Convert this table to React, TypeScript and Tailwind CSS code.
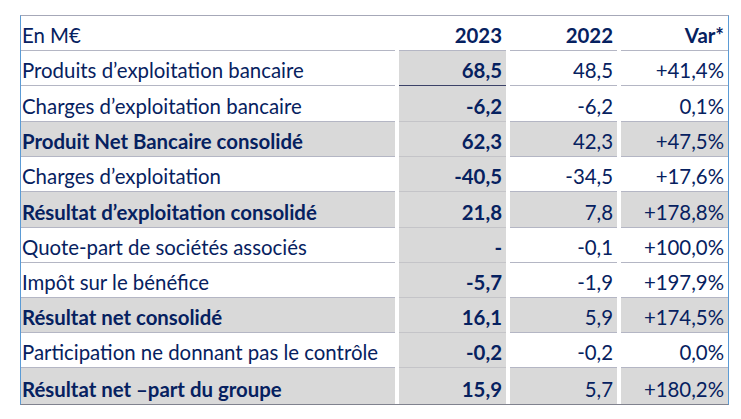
import * as React from "react";

type Row = {
  label: string;
  y23: string;
  y22: string;
  v: string;
  bold?: boolean;
  h: number;
};

const rows: Row[] = [
  { label: "Produits d’exploitation bancaire", y23: "68,5", y22: "48,5", v: "+41,4%", h: 35 },
  { label: "Charges d’exploitation bancaire", y23: "-6,2", y22: "-6,2", v: "0,1%", h: 36 },
  { label: "Produit Net Bancaire consolidé", y23: "62,3", y22: "42,3", v: "+47,5%", bold: true, h: 35 },
  { label: "Charges d’exploitation", y23: "-40,5", y22: "-34,5", v: "+17,6%", h: 35 },
  { label: "Résultat d’exploitation consolidé", y23: "21,8", y22: "7,8", v: "+178,8%", bold: true, h: 36 },
  { label: "Quote-part de sociétés associés", y23: "-", y22: "-0,1", v: "+100,0%", h: 35 },
  { label: "Impôt sur le bénéfice", y23: "-5,7", y22: "-1,9", v: "+197,9%", h: 35 },
  { label: "Résultat net consolidé", y23: "16,1", y22: "5,9", v: "+174,5%", bold: true, h: 35 },
  { label: "Participation ne donnant pas le contrôle", y23: "-0,2", y22: "-0,2", v: "0,0%", h: 35 },
  { label: "Résultat net –part du groupe", y23: "15,9", y22: "5,7", v: "+180,2%", bold: true, h: 36 },
];

const grid = "grid grid-cols-[374px_107px_107px_107px] gap-x-[4px]";

export default function App() {
  return (
    <div
      className="w-[741px] h-[419px] bg-white pt-[15px] pl-[20px] text-[#062160] text-[20.4px] leading-none"
      style={{ fontFamily: "Lato, 'Open Sans', sans-serif" }}
    >
      <div className="w-[709px] border-l border-r border-l-[#5b9bd5] border-r-[#5b9bd5] border-t border-t-[#a6a8b8] border-b border-b-[#80828e]">
        <div className={`${grid} h-[35px]`}>
          <div className="flex items-end pb-[5px] pl-[1px] border-b border-[#b4b6c4]">En M€</div>
          <div className="flex items-end justify-end pb-[5px] pr-[4px] font-bold border-b border-[#b4b6c4]">2023</div>
          <div className="flex items-end justify-end pb-[5px] pr-[4px] font-bold border-b border-[#b4b6c4]">2022</div>
          <div className="flex items-end justify-end pb-[5px] pr-[4px] font-bold border-b border-[#b4b6c4]">Var*</div>
        </div>
        {rows.map((r, i) => {
          const bg = r.bold ? "bg-[#d9d9d9]" : "bg-white";
          const last = i === rows.length - 1;
          const line = last ? "" : "border-b border-[#b4b6c4]";
          return (
            <div key={r.label} className={grid} style={{ height: r.h }}>
              <div className={`flex items-end pb-[5px] pl-[1px] ${bg} ${line} ${r.bold ? "font-bold" : ""}`}>
                {r.label}
              </div>
              <div
                className={`flex items-end justify-end pb-[5px] pr-[4px] font-bold bg-[#d9d9d9] ${
                  last ? "" : i === 0 ? "border-b border-[#3c4268]" : "border-b border-[#c4c4c8]"
                }`}
              >
                {r.y23}
              </div>
              <div className={`flex items-end justify-end pb-[5px] pr-[4px] ${bg} ${line}`}>{r.y22}</div>
              <div className={`flex items-end justify-end pb-[5px] pr-[4px] ${bg} ${line}`}>{r.v}</div>
            </div>
          );
        })}
      </div>
    </div>
  );
}
